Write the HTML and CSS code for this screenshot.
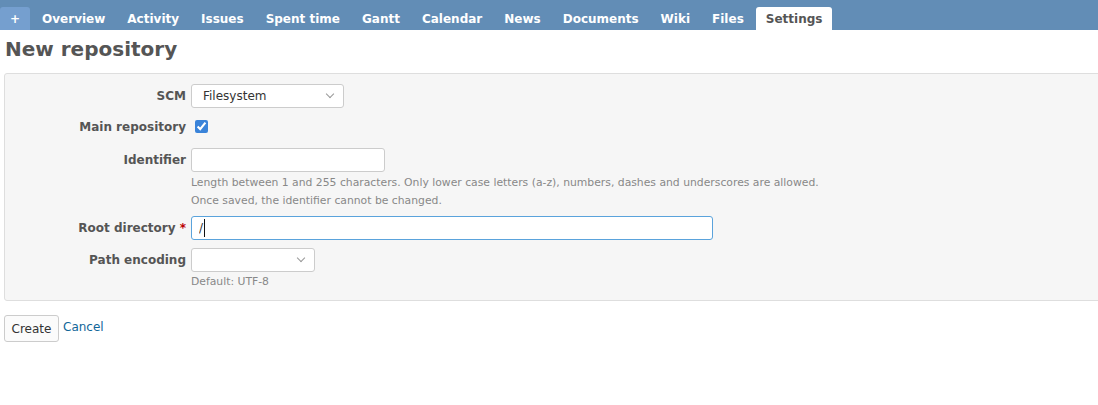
FILE: index.html
```html
<!DOCTYPE html>
<html>
<head>
<meta charset="utf-8">
<title>New repository</title>
<link rel="stylesheet" href="styles.css">
</head>
<body>
<div class="header">
  <ul class="menu">
    <li class="new"><a href="#">+</a></li>
    <li><a href="#">Overview</a></li>
    <li><a href="#">Activity</a></li>
    <li><a href="#">Issues</a></li>
    <li><a href="#">Spent time</a></li>
    <li><a href="#">Gantt</a></li>
    <li><a href="#">Calendar</a></li>
    <li><a href="#">News</a></li>
    <li><a href="#">Documents</a></li>
    <li><a href="#">Wiki</a></li>
    <li><a href="#">Files</a></li>
    <li class="selected"><a href="#">Settings</a></li>
  </ul>
</div>
<div class="content">
  <h2>New repository</h2>
  <form>
    <div class="box">
      <div class="row">
        <label>SCM</label>
        <div class="field">
          <span class="select-wrap scm"><select><option>Filesystem</option></select></span>
        </div>
      </div>
      <div class="row row-check">
        <label class="check-label">Main repository</label>
        <div class="field"><input type="checkbox" class="check" checked></div>
      </div>
      <div class="row row-ident">
        <label>Identifier</label>
        <div class="field">
          <input type="text" class="text ident">
          <div class="info first">Length between 1 and 255 characters. Only lower case letters (a-z), numbers, dashes and underscores are allowed.</div>
          <div class="info">Once saved, the identifier cannot be changed.</div>
        </div>
      </div>
      <div class="row row-root">
        <label>Root directory <span class="required">*</span></label>
        <div class="field">
          <span class="input-wrap"><input type="text" class="text root focused" value="/"><span class="caret"></span></span>
        </div>
      </div>
      <div class="row">
        <label>Path encoding</label>
        <div class="field">
          <span class="select-wrap enc"><select><option></option></select></span>
          <div class="info enc-info">Default: UTF-8</div>
        </div>
      </div>
    </div>
    <div class="actions">
      <button type="button" class="btn">Create</button>
      <a href="#" class="cancel">Cancel</a>
    </div>
  </form>
</div>
</body>
</html>
```

FILE: styles.css
```css
html, body {
  margin: 0;
  padding: 0;
}
body {
  font-family: "DejaVu Sans", Verdana, sans-serif;
  font-size: 12px;
  color: #333;
  background: #fff;
  overflow: hidden;
}
.header {
  height: 30px;
  background: #628db6;
  display: flex;
  align-items: flex-end;
}
.menu {
  display: flex;
  list-style: none;
  margin: 0;
  padding: 0;
}
.menu a {
  display: block;
  padding: 5px 10px 3px 10px;
  line-height: 15px;
  font-weight: bold;
  color: #fff;
  text-decoration: none;
  margin-right: 2px;
  border-radius: 3px 3px 0 0;
}
.menu .new a {
  background: #759fcf;
}
.menu .selected a {
  background: #fff;
  color: #555;
}
.content {
  padding: 9px 0 0 4px;
}
h2 {
  margin: 0 0 13px 0;
  padding-left: 1px;
  font-size: 20px;
  line-height: 21px;
  color: #555;
  font-weight: bold;
}
.box {
  background: #f6f6f6;
  border: 1px solid #dedede;
  border-radius: 3px;
  padding: 7px 6px 6px 6px;
  margin-right: -12px;
}
.row {
  display: flex;
  align-items: flex-start;
  padding: 3px 0;
}
.row label {
  width: 175px;
  flex: none;
  margin-right: 5px;
  text-align: right;
  font-weight: bold;
  color: #555;
  line-height: 18px;
  padding-top: 3px;
}
.row-check {
  height: 28px;
}
.row-check label {
  padding-top: 4px;
}
.row-root {
  padding-bottom: 5px;
}
.required {
  color: #bb0000;
}
.field {
  display: flex;
  flex-direction: column;
  align-items: flex-start;
}
.text {
  box-sizing: border-box;
  height: 24px;
  border: 1px solid #ccc;
  border-radius: 3px;
  background: #fff;
  font-family: "DejaVu Sans", Verdana, sans-serif;
  font-size: 12px;
  color: #333;
  padding: 0 7px;
  margin: 0;
  outline: none;
}
.ident {
  width: 194px;
}
.root {
  width: 522px;
}
.focused {
  border-color: #5aa3dc;
}
.input-wrap {
  position: relative;
  display: block;
}
.caret {
  position: absolute;
  left: 13px;
  top: 3px;
  width: 1px;
  height: 18px;
  background: #111;
}
.select-wrap {
  position: relative;
  display: block;
}
.select-wrap select {
  appearance: none;
  -webkit-appearance: none;
  box-sizing: border-box;
  height: 24px;
  border: 1px solid #ccc;
  border-radius: 3px;
  background: #fff;
  font-family: "DejaVu Sans", Verdana, sans-serif;
  font-size: 12px;
  color: #333;
  padding: 0 20px 0 11px;
  margin: 0;
  outline: none;
}
.select-wrap::after {
  content: "";
  position: absolute;
  right: 11px;
  top: 7px;
  width: 5px;
  height: 5px;
  border-right: 1.5px solid #999;
  border-bottom: 1.5px solid #999;
  transform: rotate(45deg);
  pointer-events: none;
}
.scm select {
  width: 153px;
}
.enc select {
  width: 124px;
}
.check {
  width: 13px;
  height: 13px;
  margin: 6px 0 0 4px;
  accent-color: #3a83d9;
}
.info {
  font-size: 10.8px;
  line-height: 18px;
  color: #888;
}
.info.first {
  margin-top: 2px;
}
.enc-info {
  margin-top: 1px;
}
.actions {
  margin-top: 14px;
  display: flex;
  align-items: center;
}
.btn {
  box-sizing: border-box;
  width: 55px;
  height: 27px;
  padding: 0 6px;
  border: 1px solid #ccc;
  border-radius: 3px;
  background: #fbfbfb;
  font-family: "DejaVu Sans", Verdana, sans-serif;
  font-size: 12px;
  color: #333;
  margin: 0;
}
.cancel {
  color: #169;
  text-decoration: none;
  margin-left: 4px;
  margin-top: -4px;
}
```
